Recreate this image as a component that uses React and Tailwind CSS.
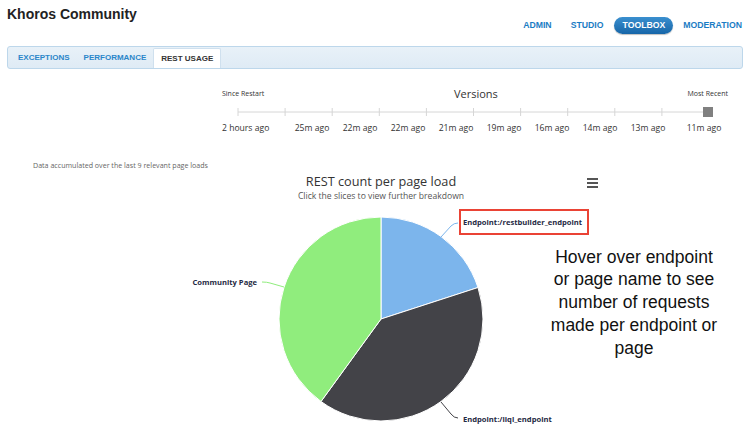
const tabs = ["EXCEPTIONS", "PERFORMANCE", "REST USAGE"];
const versions = ["25m ago", "22m ago", "22m ago", "21m ago", "19m ago", "16m ago", "14m ago", "13m ago"];

function Timeline() {
  const ticks = Array.from({ length: 10 }, (_, i) => 16 + i * 47.1);
  return (
    <div className="ml-[222px] w-[506px] font-['Open_Sans',sans-serif]">
      <div className="flex items-end justify-between h-[17px]">
        <span className="text-[7px] leading-none text-[#333] pb-[1px]">Since Restart</span>
        <span className="text-[11px] leading-none text-[#333] translate-y-[1px]">Versions</span>
        <span className="text-[7px] leading-none text-[#333] pb-[1px]">Most Recent</span>
      </div>
      <svg width="506" height="16" className="block mt-[6px]">
        <line x1="16" y1="8" x2="486" y2="8" stroke="#d6d6d6" strokeWidth="1" />
        {ticks.map((x) => (
          <line key={x} x1={x} y1="4" x2={x} y2="12" stroke="#d6d6d6" strokeWidth="1" />
        ))}
        <rect x="481" y="3" width="10" height="10" fill="#808080" />
      </svg>
      <div className="flex mt-[4px] text-[8.6px] leading-none text-[#333]">
        <span className="w-[66px]">2 hours ago</span>
        {versions.map((v, i) => (
          <span key={i} className="w-[48px] text-center">{v}</span>
        ))}
        <span className="ml-[8px] w-[48px] text-center">11m ago</span>
      </div>
    </div>
  );
}

function Pie() {
  return (
    <svg width="318" height="238" className="block overflow-visible">
      <path d="M159 113 L159 11 A102 102 0 0 1 256 81.5 Z" fill="#7cb5ec" stroke="#fff" strokeWidth="1" />
      <path d="M159 113 L256 81.5 A102 102 0 0 1 99 195.5 Z" fill="#434348" stroke="#fff" strokeWidth="1" />
      <path d="M159 113 L99 195.5 A102 102 0 0 1 159 11 Z" fill="#90ed7d" stroke="#fff" strokeWidth="1" />

      {/* connectors */}
      <path d="M219 31 L229 20 Q232 17 236 17" fill="none" stroke="#7cb5ec" strokeWidth="1" />
      <path d="M219 196 L229 208 Q232 212 236 212" fill="none" stroke="#434348" strokeWidth="1" />
      <path d="M62 81 L48 77 Q45 76 40 76" fill="none" stroke="#90ed7d" strokeWidth="1" />

      <rect x="238" y="4" width="128" height="24" fill="none" stroke="#ea4335" strokeWidth="2" />
      <g fontFamily="'Open Sans', sans-serif" fontWeight="700" fontSize="7.6" fill="#1f2a44">
        <text x="241" y="19" stroke="#fff" strokeWidth="2" paintOrder="stroke">Endpoint:/restbuilder_endpoint</text>
        <text x="241" y="216" stroke="#fff" strokeWidth="2" paintOrder="stroke">Endpoint:/liql_endpoint</text>
        <text x="35" y="79" textAnchor="end" stroke="#fff" strokeWidth="2" paintOrder="stroke">Community Page</text>
      </g>
    </svg>
  );
}

export default function App() {
  return (
    <div className="w-[750px] h-[444px] bg-white overflow-hidden font-['Liberation_Sans',Arial,sans-serif]">
      <div className="flex items-start justify-between pl-[7px] pr-[8px] pt-[6px]">
        <h1 className="text-[14px] font-bold leading-[17px] text-[#222]">Khoros Community</h1>
        <nav className="flex items-center mt-[11px] text-[8.7px] font-bold">
          <span className="text-[#1a7cc4]">ADMIN</span>
          <span className="ml-[19px] text-[#1a7cc4]">STUDIO</span>
          <span className="ml-[11px] h-[17px] px-[8px] flex items-center rounded-full bg-gradient-to-b from-[#3a8fcf] to-[#1666a8] text-white shadow-[0_1px_1px_rgba(0,0,0,0.25)]">
            TOOLBOX
          </span>
          <span className="ml-[10px] text-[#1a7cc4]">MODERATION</span>
        </nav>
      </div>

      <div className="mx-[7px] mt-[12px] h-[23px] flex items-end rounded-[3px] border border-[#bdd7eb] bg-gradient-to-b from-[#e8f1f8] to-[#dfebf5] pl-[10px] gap-[14px]">
        {tabs.map((t) =>
          t === "REST USAGE" ? (
            <span key={t} className="h-[20px] px-[7px] flex items-center bg-white border-x border-t border-[#cfe0ee] rounded-t-[2px] text-[8px] font-bold text-[#333] -ml-[7px]">
              {t}
            </span>
          ) : (
            <span key={t} className="h-[20px] flex items-center text-[8px] font-bold text-[#2a86c9]">
              {t}
            </span>
          )
        )}
      </div>

      <div className="mt-[12px]">
        <Timeline />
      </div>

      <p className="ml-[33px] mt-[29px] text-[7.1px] leading-none text-[#666] font-['Open_Sans',sans-serif]">
        Data accumulated over the last 9 relevant page loads
      </p>

      <div className="flex mt-[4px]">
        <div className="ml-[222px] w-[318px] font-['Open_Sans',sans-serif]">
          <div className="text-center text-[12.7px] leading-[16px] text-[#333]">REST count per page load</div>
          <div className="text-center text-[8.6px] leading-[12px] text-[#555] mt-[1px]">Click the slices to view further breakdown</div>
          <div className="mt-[4px]">
            <Pie />
          </div>
        </div>
        <div className="w-[190px] flex flex-col">
          <div className="ml-[47px] mt-[5px] flex flex-col gap-[2px] w-[11px]">
            <span className="h-[2px] bg-[#555]" />
            <span className="h-[2px] bg-[#555]" />
            <span className="h-[2px] bg-[#555]" />
          </div>
          <p className="ml-[9px] w-[170px] mt-[58px] text-center text-[17.5px] leading-[22.7px] text-[#111] font-['Liberation_Sans',Arial,sans-serif]">
            Hover over endpoint or page name to see number of requests made per endpoint or page
          </p>
        </div>
      </div>
    </div>
  );
}
